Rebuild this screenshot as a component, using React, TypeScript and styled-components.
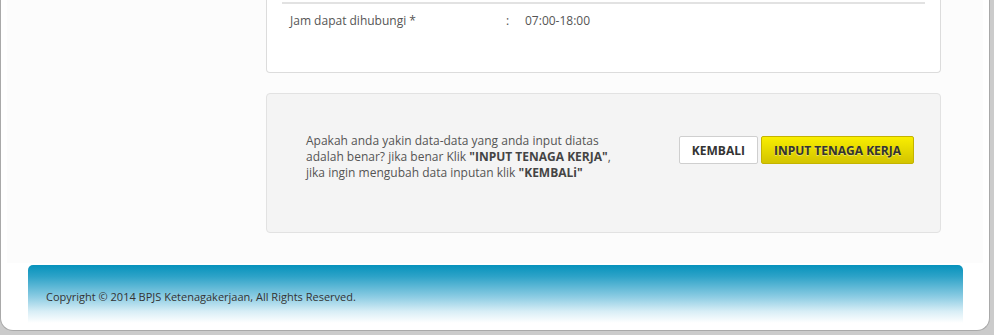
import styled, { createGlobalStyle } from 'styled-components';

const GlobalStyle = createGlobalStyle`
  html, body {
    margin: 0;
    padding: 0;
    background: #cbcbcb;
    font-family: "Open Sans", "Liberation Sans", Arial, sans-serif;
    font-size: 12px;
    color: #555;
  }
`;

const Page = styled.div`
  width: 988px;
  height: 330px;
  background: #fff;
  border: 1px solid #a9a9a9;
  border-top: none;
  border-radius: 0 0 13px 13px;
  box-sizing: content-box;
  display: flex;
  flex-direction: column;
  overflow: hidden;
`;

const Content = styled.div`
  margin: 0 6px 0 6px;
  height: 263px;
  background: #fcfcfc;
  display: grid;
  grid-template-columns: 259px 675px;
  align-content: start;
`;

const Main = styled.div`
  grid-column: 2;
  display: flex;
  flex-direction: column;
  gap: 20px;
`;

const Panel = styled.div`
  background: #fff;
  border: 1px solid #dcdcdc;
  border-top: none;
  border-radius: 0 0 4px 4px;
  padding: 0 15px;
  height: 73px;
  box-sizing: border-box;
`;

const Row = styled.div`
  border-top: 2px solid #e2e2e2;
  margin-top: 2px;
  display: grid;
  grid-template-columns: 216px 19px 1fr;
  padding: 9px 8px;
  line-height: 16px;
  color: #555;
`;

const Confirm = styled.div`
  background: #f4f4f4;
  border: 1px solid #e2e2e2;
  border-radius: 4px;
  height: 140px;
  box-sizing: border-box;
  padding: 39px 26px 0 39px;
  display: flex;
  justify-content: space-between;
  align-items: flex-start;
`;

const Message = styled.p`
  margin: 0;
  width: 320px;
  line-height: 16px;
  color: #555;

  b {
    color: #444;
  }
`;

const Actions = styled.div`
  display: flex;
  gap: 3px;
  margin-top: 3px;
`;

const Button = styled.button<{ $primary?: boolean }>`
  height: 28px;
  box-sizing: border-box;
  padding: 0 12px;
  font-family: inherit;
  font-size: 12px;
  font-weight: 700;
  color: #333;
  border-radius: 2px;
  cursor: pointer;
  border: 1px solid ${(p) => (p.$primary ? '#c4b300' : '#cfcfcf')};
  background: ${(p) => (p.$primary ? 'linear-gradient(#f9ee00, #d3c400)' : '#fff')};
  text-shadow: ${(p) => (p.$primary ? '0 1px 0 rgba(255,255,255,0.4)' : 'none')};
`;

const Footer = styled.div`
  margin: 2px 26px 0 27px;
  height: 58px;
  border-radius: 5px 5px 0 0;
  background: linear-gradient(#0692bc 0%, #2ea3c8 20%, #8ccce3 55%, #d8eef6 80%, #ffffff 100%);
  padding: 25px 18px 0;
  box-sizing: border-box;
  font-size: 11px;
  line-height: 14px;
  color: #333;
`;

export default function App() {
  return (
    <>
      <GlobalStyle />
      <Page>
        <Content>
          <Main>
            <Panel>
              <Row>
                <span>Jam dapat dihubungi *</span>
                <span>:</span>
                <span>07:00-18:00</span>
              </Row>
            </Panel>
            <Confirm>
              <Message>
                Apakah anda yakin data-data yang anda input diatas adalah benar? jika benar Klik{' '}
                <b>"INPUT TENAGA KERJA"</b>, jika ingin mengubah data inputan klik <b>"KEMBALi"</b>
              </Message>
              <Actions>
                <Button>KEMBALI</Button>
                <Button $primary>INPUT TENAGA KERJA</Button>
              </Actions>
            </Confirm>
          </Main>
        </Content>
        <Footer>Copyright © 2014 BPJS Ketenagakerjaan, All Rights Reserved.</Footer>
      </Page>
    </>
  );
}
